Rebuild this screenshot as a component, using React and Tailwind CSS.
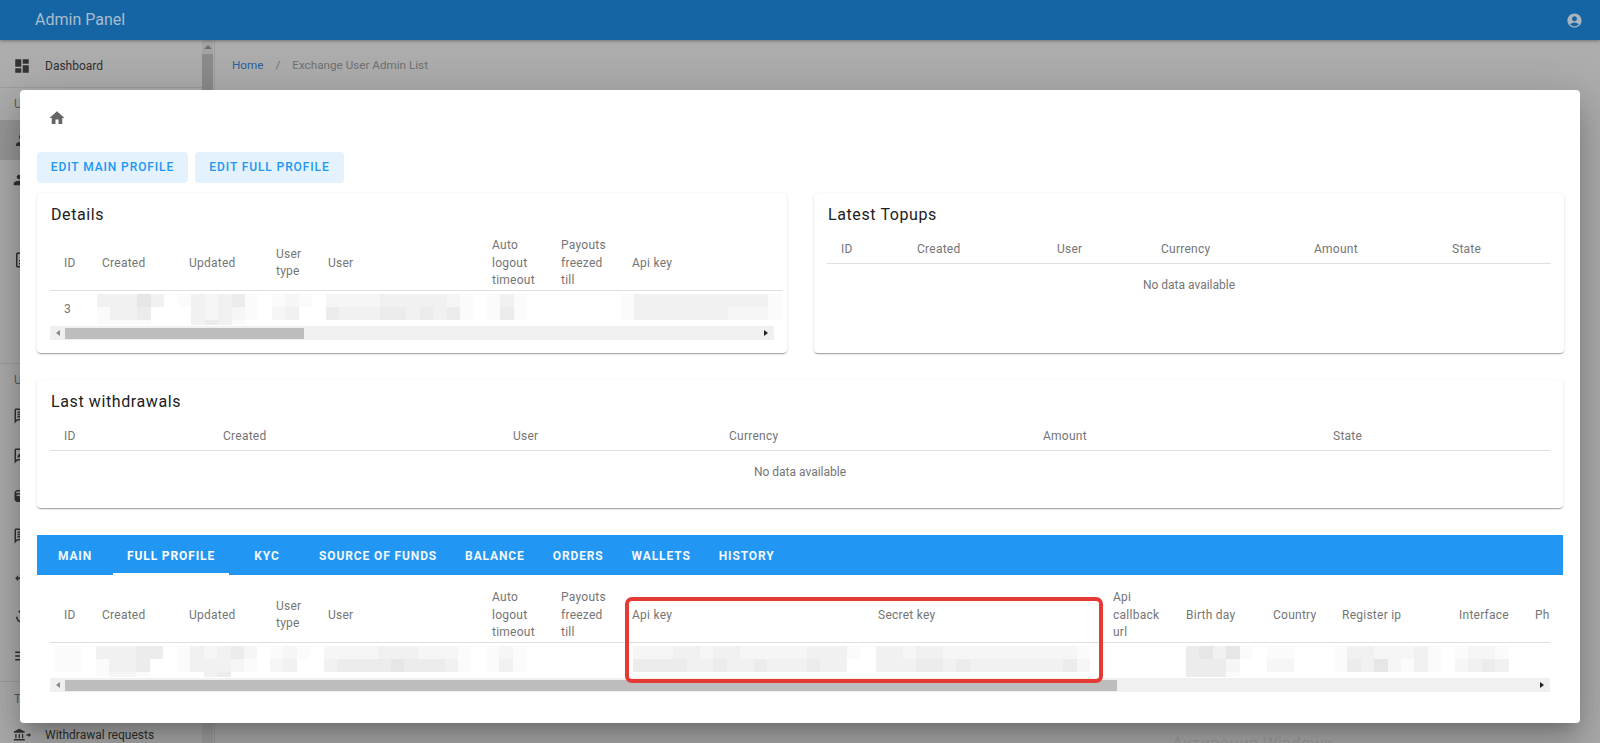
import { MdDashboard, MdPerson, MdPeople, MdHome, MdAccountCircle, MdOutlineDescription, MdOutlineChat, MdOutlineRateReview, MdWallet, MdSwapHoriz, MdReplay, MdMenu } from 'react-icons/md';

const SHADES = ['bg-white', 'bg-[#fbfbfb]', 'bg-[#f6f6f6]', 'bg-[#f1f1f1]', 'bg-[#ececec]', 'bg-[#e6e6e6]'];

const MAIN_COLS = [
    ['ID', 38], ['Created', 87], ['Updated', 87], ['User type', 52], ['User', 164], ['Auto logout timeout', 69], ['Payouts freezed till', 71],
];

const DETAILS_COLS = [...MAIN_COLS, ['Api key', 155]];

const FULL_COLS = [
    ...MAIN_COLS, ['Api key', 246], ['Secret key', 235], ['Api callback url', 73], ['Birth day', 87], ['Country', 69], ['Register ip', 117], ['Interface', 76], ['Phone', 100],
];

const TOPUP_COLS = [['ID', 76], ['Created', 140], ['User', 104], ['Currency', 153], ['Amount', 138], ['State', 113]];
const WITHDRAW_COLS = [['ID', 159], ['Created', 290], ['User', 216], ['Currency', 314], ['Amount', 290], ['State', 231]];

const DETAILS_ROW = [
    { text: '3' },
    { x: 9, rows: ['33353', '13340', '11110'] },
    { x: 3, rows: ['132341', '032321', '034310'] },
    { x: 10, rows: ['121', '230'] },
    { x: 12, rows: ['22223333321', '43334434341'] },
    { x: 9, rows: ['131', '141'] },
    { rows: [] },
    { x: 3, rows: ['133333333331', '133333332221'] },
];

const FULL_ROW = [
    { x: 5, rows: ['11', '11'] },
    { x: 8, rows: ['33344', '13340', '12210'] },
    { x: 2, rows: ['132342', '133321', '003400'] },
    { x: 8, rows: ['121', '230'] },
    { x: 10, rows: ['22223332221', '34444544431'] },
    { x: 8, rows: ['121', '131'] },
    { rows: [] },
    { x: 15, rows: ['22233233222223331', '4444334334333433'] },
    { x: 12, rows: ['3323322222222221', '3334434333333342'] },
    { rows: [] },
    { x: 14, rows: ['45351', '44420', '44410'] },
    { x: 8, rows: ['11', '22'] },
    { x: 6, rows: ['13322231', '14352131'] },
    { x: 10, rows: ['1221', '2343'] },
];

const TABS = ['MAIN', 'FULL PROFILE', 'KYC', 'SOURCE OF FUNDS', 'BALANCE', 'ORDERS', 'WALLETS', 'HISTORY'];

function BankArrow({ className }) {
    return (
        <svg viewBox="0 0 20 16" className={className} fill="currentColor">
            <path d="M7 1 1 4v1.5h12V4z" />
            <path d="M2.5 7H4v4.500H2.500zM6.200 7h1.500v4.500H6.200zM9.900 7h1.500v4.500H9.900zM1 12.500h12V14H1z" />
            <path d="M15 7.200h2.500V5.500L20 8l-2.500 2.500V8.800H15z" />
        </svg>
    );
}

function Blur({ x = 0, rows }) {
    return (
        <div className="h-[31px] overflow-hidden" style={{ marginLeft: x }}>
            {rows.map((row, i) => (
                <div key={i} className="flex">
                    {row.split('').map((level, j) => (
                        <div key={j} className={`w-[13.4px] h-[13.4px] shrink-0 ${SHADES[level]}`}></div>
                    ))}
                </div>
            ))}
        </div>
    );
}

function DataTable({ cols, row, headHeight }) {
    return (
        <table className="table-fixed border-collapse w-max">
            <colgroup>
                {cols.map(([name, width]) => <col key={name} style={{ width }} />)}
            </colgroup>
            <thead>
                <tr className={`border-b border-[#e0e0e0] ${headHeight}`}>
                    {cols.map(([name]) => (
                        <th key={name} className="pl-[14px] pr-[4px] pt-[2px] text-left font-normal text-[12px] leading-[17.5px] tracking-[0.25px] text-[#757575]">{name}</th>
                    ))}
                </tr>
            </thead>
            <tbody>
                {row && (
                    <tr className="h-[36px]">
                        {row.map((cell, i) => (
                            <td key={i} className="p-0 align-top">
                                {cell.text
                                    ? <div className="pl-[14px] pt-[9px] text-[12px] text-[#757575]">{cell.text}</div>
                                    : <div className="pt-[3px]"><Blur x={cell.x} rows={cell.rows} /></div>}
                            </td>
                        ))}
                    </tr>
                )}
            </tbody>
        </table>
    );
}

function ScrollBar({ thumb }) {
    return (
        <div className="flex items-center h-[14px] bg-[#f0f0f0]">
            <div className="w-[15px] flex justify-center">
                <div className="border-y-[3px] border-y-transparent border-r-[4px] border-r-[#8a8a8a]"></div>
            </div>
            <div className={`h-[11px] bg-[#bdbdbd] ${thumb}`}></div>
            <div className="flex-1 flex justify-end pr-[6px]">
                <div className="border-y-[3px] border-y-transparent border-l-[4px] border-l-[#222222]"></div>
            </div>
        </div>
    );
}

function Card({ title, className, children }) {
    return (
        <section className={`bg-white rounded-[4px] px-[13px] shadow-[0_2px_1px_-1px_rgba(0,0,0,0.2),0_1px_1px_0_rgba(0,0,0,0.14),0_1px_3px_0_rgba(0,0,0,0.12)] ${className}`}>
            <h2 className="h-[42px] pl-[1px] pt-[2px] flex items-center text-[16px] tracking-[0.6px] text-[#212121]">{title}</h2>
            {children}
        </section>
    );
}

function EmptyTable({ cols }) {
    return (
        <div>
            <DataTable cols={cols} headHeight="h-[28px]" />
            <p className="h-[43px] flex items-center justify-center text-[12px] text-[#757575]">No data available</p>
        </div>
    );
}

function SideItem({ icon: Icon, label, active }) {
    return (
        <div className={`h-[40px] flex items-center pl-[13px] text-[12px] text-[#303030] ${active ? 'bg-[#989898]' : ''}`}>
            <span className="w-[32px] shrink-0">{Icon && <Icon className="w-[18px] h-[18px] text-[#333333]" />}</span>
            {label}
        </div>
    );
}

export default function App() {
    return (
        <div className="relative h-[743px] overflow-hidden bg-[#adadad] font-['Roboto',sans-serif]">
            <header className="relative z-10 h-[40px] flex items-center justify-between pl-[35px] pr-[17px] bg-[#1565a5] shadow-[0_1px_3px_rgba(0,0,0,0.35)]">
                <span className="text-[16px] text-[#a9bccd]">Admin Panel</span>
                <MdAccountCircle className="w-[17px] h-[17px] text-[#aab4bd]" />
            </header>

            <div className="flex h-[703px]">
                <aside className="relative w-[215px] shrink-0 border-r border-[#9d9d9d] flex">
                    <div className="w-[202px] pt-[6px]">
                        <SideItem icon={MdDashboard} label="Dashboard" />
                        <div className="mt-[1px] border-t border-[#9d9d9d] h-[33px] flex items-center pl-[14px] text-[12px] text-[#5a5a5a]">Users</div>
                        <SideItem icon={MdPerson} active />
                        <SideItem icon={MdPeople} />
                        <div className="h-[40px]"></div>
                        <SideItem icon={MdOutlineDescription} />
                        <div className="h-[84px] border-b border-[#9d9d9d]"></div>
                        <div className="h-[32px] flex items-center pl-[14px] text-[12px] text-[#5a5a5a]">Users</div>
                        <SideItem icon={MdOutlineChat} />
                        <SideItem icon={MdOutlineRateReview} />
                        <SideItem icon={MdWallet} />
                        <SideItem icon={MdOutlineChat} />
                        <SideItem icon={MdSwapHoriz} />
                        <SideItem icon={MdReplay} />
                        <SideItem icon={MdMenu} />
                        <div className="mt-[5px] border-t border-[#9d9d9d] h-[34px] flex items-center pl-[14px] text-[12px] text-[#5a5a5a]">Transactions</div>
                        <SideItem icon={BankArrow} label="Withdrawal requests" />
                    </div>
                    <div className="w-[11px] bg-[#a3a3a3]">
                        <div className="h-[14px] flex items-center justify-center">
                            <div className="border-x-[4px] border-x-transparent border-b-[4px] border-b-[#6e6e6e]"></div>
                        </div>
                        <div className="h-[120px] bg-[#8b8b8b]"></div>
                    </div>
                </aside>
                <main className="flex-1 pl-[17px] pt-[17px] text-[11.700px] text-[#707070]">
                    <span className="text-[#2b5f9e]">Home</span>
                    <span className="mx-[12px]">/</span>
                    <span>Exchange User Admin List</span>
                </main>
            </div>

            <div className="absolute left-[20px] top-[90px] z-20 w-[1560px] h-[633px] bg-white rounded-[4px] px-[17px] shadow-[0_11px_15px_-7px_rgba(0,0,0,0.2),0_24px_38px_3px_rgba(0,0,0,0.14),0_9px_46px_8px_rgba(0,0,0,0.12)]">
                <div className="h-[62px] pl-[11px] pt-[19px]">
                    <MdHome className="w-[18px] h-[18px] text-[#666666]" />
                </div>

                <div className="flex gap-[7px]">
                    <button className="h-[31px] w-[151px] pb-[1px] rounded-[4px] bg-[#e3f2fd] text-[#2196f3] text-[12px] font-medium tracking-[0.9px]">EDIT MAIN PROFILE</button>
                    <button className="h-[31px] w-[149px] pb-[1px] rounded-[4px] bg-[#e3f2fd] text-[#2196f3] text-[12px] font-medium tracking-[0.9px]">EDIT FULL PROFILE</button>
                </div>

                <div className="mt-[10px] grid grid-cols-[750px_750px] gap-x-[27px] items-start">
                    <Card title="Details" className="h-[160px]">
                        <div className="w-[724px]">
                            <DataTable cols={DETAILS_COLS} row={DETAILS_ROW} headHeight="h-[54px]" />
                            <ScrollBar thumb="w-[239px]" />
                        </div>
                    </Card>
                    <Card title="Latest Topups" className="h-[160px]">
                        <EmptyTable cols={TOPUP_COLS} />
                    </Card>
                </div>

                <Card title="Last withdrawals" className="mt-[27px] h-[128px]">
                    <EmptyTable cols={WITHDRAW_COLS} />
                </Card>

                <nav className="mt-[27px] h-[40px] flex bg-[#2196f3]">
                    {TABS.map((tab) => (
                        <div key={tab} className={`h-[40px] min-w-[76px] px-[14px] pt-[3px] flex items-center justify-center border-b-2 text-[12px] font-bold tracking-[0.88px] ${tab === 'FULL PROFILE' ? 'text-white border-white' : 'text-[#f2f8fe] border-transparent'}`}>{tab}</div>
                    ))}
                </nav>

                <div className="relative mt-[12px] mx-[13px] w-[1500px] overflow-hidden">
                    <DataTable cols={FULL_COLS} row={FULL_ROW} headHeight="h-[55px]" />
                    <ScrollBar thumb="w-[1052px]" />
                </div>

                <div className="absolute left-[605px] top-[507px] w-[478px] h-[86px] border-[4px] border-[#e53935] rounded-[7px]"></div>
            </div>

            <div className="absolute left-[1172px] top-[733px] z-10 text-[17px] leading-[20px] text-[#a0a0a0]">Активация Windows</div>
        </div>
    );
}
